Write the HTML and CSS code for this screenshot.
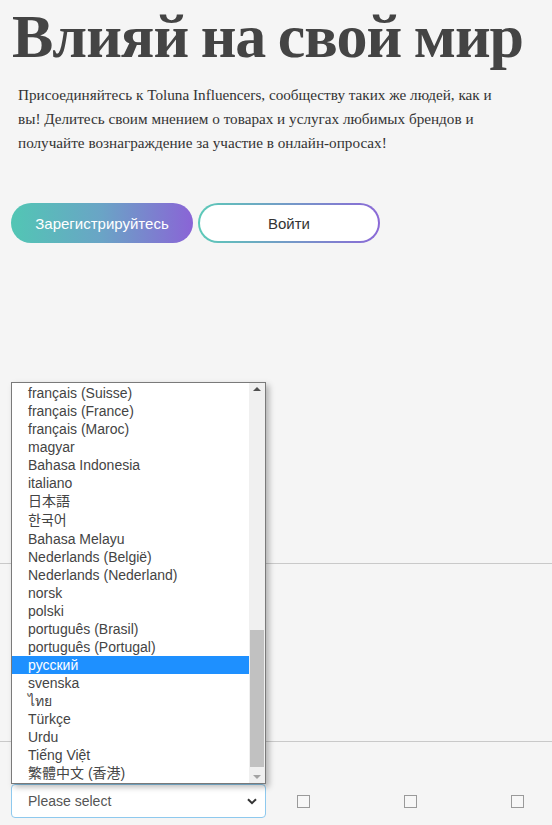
FILE: index.html
```html
<!DOCTYPE html>
<html lang="ru">
<head>
<meta charset="utf-8">
<title>Toluna Influencers</title>
<link rel="stylesheet" href="styles.css">
</head>
<body>
<main class="page">
  <section class="hero">
    <h1 class="title">Влияй на свой мир</h1>
    <p class="lead">Присоединяйтесь к Toluna Influencers, сообществу таких же людей, как и вы! Делитесь своим мнением о товарах и услугах любимых брендов и получайте вознаграждение за участие в онлайн-опросах!</p>
    <div class="actions">
      <a class="btn btn-primary">Зарегистрируйтесь</a>
      <a class="btn btn-outline">Войти</a>
    </div>
  </section>

  <hr class="rule rule-first">
  <hr class="rule rule-second">

  <div class="form-row">
    <div class="select-wrap">
      <div class="listbox">
        <ul class="options">
          <li class="opt">français (Canada)</li>
          <li class="opt">français (Suisse)</li>
          <li class="opt">français (France)</li>
          <li class="opt">français (Maroc)</li>
          <li class="opt">magyar</li>
          <li class="opt">Bahasa Indonesia</li>
          <li class="opt">italiano</li>
          <li class="opt cjk">日本語</li>
          <li class="opt cjk">한국어</li>
          <li class="opt">Bahasa Melayu</li>
          <li class="opt">Nederlands (België)</li>
          <li class="opt">Nederlands (Nederland)</li>
          <li class="opt">norsk</li>
          <li class="opt">polski</li>
          <li class="opt">português (Brasil)</li>
          <li class="opt">português (Portugal)</li>
          <li class="opt selected">русский</li>
          <li class="opt">svenska</li>
          <li class="opt">ไทย</li>
          <li class="opt">Türkçe</li>
          <li class="opt">Urdu</li>
          <li class="opt">Tiếng Việt</li>
          <li class="opt cjk">繁體中文 (香港)</li>
        </ul>
        <div class="scrollbar">
          <div class="arrow arrow-up"></div>
          <div class="track"><div class="thumb"></div></div>
          <div class="arrow arrow-down"></div>
        </div>
      </div>
      <div class="select">
        <span class="select-text">Please select</span>
        <svg class="chevron" width="10" height="7" viewBox="0 0 10 7"><path d="M1 1.2 L5 5.2 L9 1.2" fill="none" stroke="#333" stroke-width="2"/></svg>
      </div>
    </div>
    <div class="checks">
      <span class="check"></span>
      <span class="check"></span>
      <span class="check"></span>
    </div>
  </div>
</main>
</body>
</html>
```

FILE: styles.css
```css
* { box-sizing: border-box; }

html, body {
  margin: 0;
  padding: 0;
  background: #f5f5f5;
  overflow: hidden;
}

.page {
  width: 552px;
  height: 825px;
}

.title {
  margin: 0;
  padding-left: 12px;
  font-family: "Liberation Serif", "Times New Roman", serif;
  font-weight: bold;
  font-size: 62px;
  letter-spacing: -1px;
  word-spacing: -2px;
  line-height: 72px;
  color: #444;
  white-space: nowrap;
}

.lead {
  margin: 11px 0 0;
  padding-left: 18px;
  max-width: 507px;
  font-family: "Liberation Serif", "Times New Roman", serif;
  font-size: 15.2px;
  line-height: 24px;
  color: #333;
}

.actions {
  display: flex;
  gap: 5px;
  margin-top: 48px;
  padding-left: 11px;
}

.btn {
  display: flex;
  align-items: center;
  justify-content: center;
  width: 182px;
  height: 40px;
  border-radius: 20px;
  font-family: "Liberation Sans", Arial, sans-serif;
  font-size: 15px;
}

.btn-primary {
  background: linear-gradient(90deg, #52c6b4 0%, #6aa4c6 50%, #8a64d6 100%);
  color: #fff;
}

.btn-outline {
  border: 2px solid transparent;
  background: linear-gradient(#fff, #fff) padding-box,
              linear-gradient(90deg, #5ccab8, #8b69d7) border-box;
  color: #333;
}

.rule {
  margin: 0;
  border: 0;
  height: 1px;
  background: #c9c9c9;
}

.rule-first { margin-top: 320px; }
.rule-second { margin-top: 177px; }

.form-row {
  display: flex;
  align-items: flex-start;
  margin-top: 42px;
  padding-left: 11px;
}

.select-wrap {
  position: relative;
  width: 255px;
}

.select {
  display: flex;
  align-items: center;
  justify-content: space-between;
  height: 34px;
  padding: 0 8px 0 16px;
  background: #fff;
  border: 1px solid #8ec9ee;
  border-radius: 4px;
  font-family: "Liberation Sans", Arial, sans-serif;
  font-size: 14px;
  color: #555;
}

.listbox {
  position: absolute;
  left: 0;
  bottom: 100%;
  width: 255px;
  height: 402px;
  display: flex;
  background: #fff;
  border: 1px solid #7a7a7a;
  box-shadow: 3px 3px 6px rgba(0, 0, 0, 0.28);
  overflow: hidden;
  z-index: 2;
}

.options {
  flex: 1;
  margin: -17px 0 0;
  padding: 0;
  list-style: none;
  font-family: "Liberation Sans", Arial, "Noto Sans", "Noto Sans CJK JP", sans-serif;
  font-size: 14px;
  color: #444;
}

.opt {
  padding: 1px 0 1px 16px;
  line-height: 16px;
  white-space: nowrap;
}

.opt.cjk {
  line-height: 17px;
}

.opt.selected {
  background: #1e90ff;
  color: #fff;
}

.scrollbar {
  display: flex;
  flex-direction: column;
  width: 16px;
  background: #f0f0f0;
}

.arrow {
  height: 12px;
  display: flex;
  align-items: center;
  justify-content: center;
}

.arrow::before {
  content: "";
  width: 0;
  height: 0;
  border-left: 4px solid transparent;
  border-right: 4px solid transparent;
}

.arrow-up::before {
  border-bottom: 4px solid #505050;
}

.arrow-down::before {
  border-top: 4px solid #a3a3a3;
}

.track {
  flex: 1;
  display: flex;
  flex-direction: column;
  justify-content: flex-end;
  padding: 0 1px 4px;
}

.thumb {
  height: 137px;
  background: #c1c1c1;
}

.checks {
  display: flex;
  gap: 94px;
  margin-left: 31px;
  padding-top: 11px;
}

.check {
  display: block;
  width: 13px;
  height: 13px;
  border: 1px solid #9a9a9a;
  background: #f7f7f7;
}
```
